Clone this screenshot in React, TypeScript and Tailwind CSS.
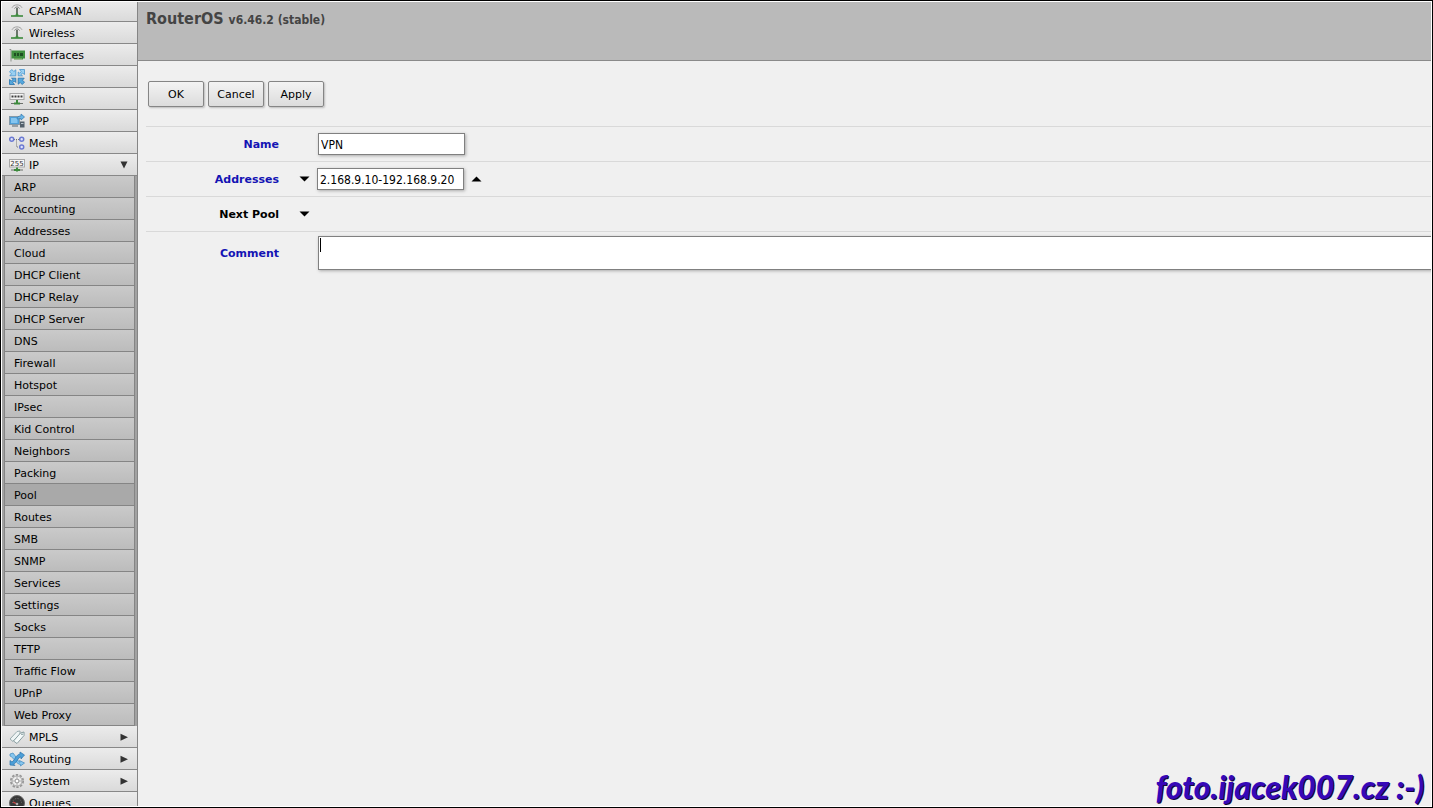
import React from "react";

type MenuEntry = {
  label: string;
  icon: React.ReactNode;
  arrow?: "down" | "right";
};

const AntennaIcon: React.FC = () => (
  <svg viewBox="0 0 16 16" className="size-4" fill="none">
    <path d="M3 4.800C4.500 0.900 11.500 0.900 13 4.800" stroke="#a3a3a3" />
    <path d="M5.500 5.500C6.500 3.500 9.500 3.500 10.500 5.500" stroke="#7c7c7c" />
    <path d="M8 5v8" stroke="#4d5a4d" strokeWidth="1.600" />
    <path d="M2 13h12" stroke="#3c8a3c" strokeWidth="1.600" />
    <path d="M4.500 12.500C7 12.200 7.300 11 8 9.500C8.700 11 9 12.200 11.500 12.500Z" fill="#3f8f3f" />
  </svg>
);

const InterfacesIcon: React.FC = () => (
  <svg viewBox="0 0 16 16" className="size-4" fill="none">
    <path d="M0.500 2.500h1.500v12" stroke="#8d938d" />
    <path d="M2.500 3.500H16v8h-2v1H5v-1H2.500Z" fill="#3f8f3f" />
    <path d="M5 6h2v3H5zM8 6h2v3H8zM11 6h3v3h-3z" fill="#1d4f22" />
    <path d="M6 11v1.500M8 11v1.500M10 11v1.500M12 11v1.500" stroke="#b9c98a" strokeWidth="0.700" />
  </svg>
);

const BridgeIcon: React.FC = () => (
  <svg viewBox="0 0 16 16" className="size-4" strokeLinejoin="round" strokeWidth="0.800">
    <g fill="#9ad0f2" stroke="#4694cd">
      <path d="M0.500 2.800L2.800 0.500L4.800 2.500L6.800 0.800V6.800H0.800L2.500 4.800Z" />
      <path d="M9.200 6.800V3L10.700 4.200L12.200 2.700L10.500 0.500H15.500V5.500L13.500 4L12 5.500L13.500 6.800Z" />
    </g>
    <g fill="#55a8de" stroke="#2471ac">
      <path d="M0.500 15.500V10.500L2.500 12L4 10.500L2.500 9.200H6.800V13.500L5.300 12L3.800 13.500L5.500 15.500Z" />
      <path d="M15.500 13.200L13.200 15.500L11.200 13.500L9.200 15.200V9.200H15.200L13.500 11.200Z" />
    </g>
  </svg>
);

const SwitchIcon: React.FC = () => (
  <svg viewBox="0 0 16 16" className="size-4" fill="none">
    <rect x="1" y="2.500" width="14" height="6" fill="#f4f4f4" stroke="#a5a5a5" />
    <path d="M2.500 5.500h11" stroke="#3d3d3d" strokeWidth="2" strokeDasharray="2 1" />
    <path d="M8 9v4" stroke="#3c8a3c" strokeWidth="2" />
    <path d="M2 12.500h12" stroke="#6b706b" />
    <path d="M5 12.500h6" stroke="#3c8a3c" strokeWidth="2" />
  </svg>
);

const PppIcon: React.FC = () => (
  <svg viewBox="0 0 16 16" className="size-4" fill="none">
    <rect x="0.500" y="3.500" width="10" height="8" fill="#4e9fd8" stroke="#8499a8" />
    <rect x="2" y="5" width="6.500" height="5" fill="#85c5ef" />
    <path d="M3 13h6" stroke="#808a91" strokeWidth="1.500" />
    <path d="M8 6C8 4 9.500 3 12 3V1L15.500 4L12 7V5.500C10 5.500 9 6 8 6Z" fill="#69b6e8" stroke="#3277ae" strokeWidth="0.700" />
    <rect x="11" y="8.500" width="4.500" height="6" fill="#53606b" />
    <path d="M12 10.500h2.500" stroke="#b9c5cd" />
  </svg>
);

const MeshIcon: React.FC = () => (
  <svg viewBox="0 0 16 16" className="size-4" fill="none">
    <path d="M5 4.500h5M7.500 4.500v7.500h2.500" stroke="#777" strokeDasharray="1 1" />
    <g fill="#dfe4fb" stroke="#6b79d2" strokeWidth="1.500">
      <circle cx="2.700" cy="4.200" r="2" />
      <circle cx="12.700" cy="4.200" r="2" />
      <circle cx="12.700" cy="12" r="2" />
    </g>
  </svg>
);

const IpIcon: React.FC = () => (
  <svg viewBox="0 0 16 16" className="size-4" fill="none">
    <rect x="0.500" y="2.500" width="15" height="7.500" fill="#f7f7f7" stroke="#a8a8a8" />
    <text x="8" y="8.800" textAnchor="middle" fontSize="7" fontFamily="DejaVu Sans" fill="#333">
      255
    </text>
    <path d="M8 10.500v4" stroke="#3c8a3c" strokeWidth="2" />
    <path d="M2 13h12" stroke="#6b706b" />
    <path d="M5 13h6" stroke="#3c8a3c" strokeWidth="2" />
  </svg>
);

const MplsIcon: React.FC = () => (
  <svg viewBox="0 0 16 16" className="size-4" strokeLinejoin="round">
    <path d="M1 10L8 2.500L11 2L11 5L4 12.500Z" fill="#eef4f4" stroke="#91a5a8" strokeWidth="0.900" />
    <path d="M4.500 12L11.500 4L15 3L15 6.500L8 14.500Z" fill="#f5fafa" stroke="#7e9599" strokeWidth="0.900" />
    <circle cx="13" cy="5.200" r="0.800" fill="#698488" />
  </svg>
);

const RoutingIcon: React.FC = () => (
  <svg viewBox="0 0 16 16" className="size-4" strokeLinejoin="round" strokeWidth="0.700">
    <path
      d="M1 3L4 2C7 5 8 10 11 11.500L10.500 9.500L15.500 12L11.500 15V13.500C7 13 5.500 7 1 5Z"
      fill="#86c6ee"
      stroke="#3e87bd"
    />
    <path
      d="M1 14V9.500L3 11C6 9 7 3.500 11 3V1L15.500 4L12 8V6C9 6 8 12 4.500 13L6 14.500Z"
      fill="#4c9fd8"
      stroke="#2c72ab"
    />
  </svg>
);

const SystemIcon: React.FC = () => (
  <svg viewBox="0 0 16 16" className="size-4" fill="none">
    <circle cx="8" cy="8" r="6.200" stroke="#969696" strokeWidth="1.700" strokeDasharray="2.400 1.490" />
    <circle cx="8" cy="8" r="5" fill="#ededed" stroke="#999" strokeWidth="0.800" />
    <circle cx="8" cy="8" r="2" fill="#fff" stroke="#8c8c8c" />
    <path d="M8 3v3M8 10v3M3 8h3M10 8h3" stroke="#b3b3b3" />
  </svg>
);

const QueuesIcon: React.FC = () => (
  <svg viewBox="0 0 16 16" className="size-4" fill="none">
    <circle cx="8" cy="8" r="7.500" fill="#383838" stroke="#676767" />
    <path d="M3.500 8a4.500 4.500 0 0 1 9 0" stroke="#777" strokeDasharray="1 1.500" />
    <path d="M8 9L4 7" stroke="#d14545" strokeWidth="1.300" />
    <circle cx="8" cy="9" r="1.300" fill="#aaa" />
  </svg>
);

const topMenu: MenuEntry[] = [
  { label: "CAPsMAN", icon: <AntennaIcon /> },
  { label: "Wireless", icon: <AntennaIcon /> },
  { label: "Interfaces", icon: <InterfacesIcon /> },
  { label: "Bridge", icon: <BridgeIcon /> },
  { label: "Switch", icon: <SwitchIcon /> },
  { label: "PPP", icon: <PppIcon /> },
  { label: "Mesh", icon: <MeshIcon /> },
  { label: "IP", icon: <IpIcon />, arrow: "down" },
];

const ipMenu = [
  "ARP",
  "Accounting",
  "Addresses",
  "Cloud",
  "DHCP Client",
  "DHCP Relay",
  "DHCP Server",
  "DNS",
  "Firewall",
  "Hotspot",
  "IPsec",
  "Kid Control",
  "Neighbors",
  "Packing",
  "Pool",
  "Routes",
  "SMB",
  "SNMP",
  "Services",
  "Settings",
  "Socks",
  "TFTP",
  "Traffic Flow",
  "UPnP",
  "Web Proxy",
];

const bottomMenu: MenuEntry[] = [
  { label: "MPLS", icon: <MplsIcon />, arrow: "right" },
  { label: "Routing", icon: <RoutingIcon />, arrow: "right" },
  { label: "System", icon: <SystemIcon />, arrow: "right" },
  { label: "Queues", icon: <QueuesIcon /> },
];

const MenuItem: React.FC<{ entry: MenuEntry }> = ({ entry }) => (
  <li>
    <a
      href="#"
      className="flex h-[22px] items-center border-b border-[#888] bg-linear-to-b from-[#ececec] to-[#dadada] pr-[9px] pl-[7px]"
    >
      {entry.icon}
      <span className="ml-1 flex-1 pt-0.5">{entry.label}</span>
      {entry.arrow && (
        <svg viewBox="0 0 8 8" className="size-2 fill-[#333]">
          {entry.arrow === "down" ? <path d="M0.500 0.500h7L4 7.500Z" /> : <path d="M0.500 0.800L8 4.300L0.500 7.800Z" />}
        </svg>
      )}
    </a>
  </li>
);

const Sidebar: React.FC = () => (
  <nav className="w-[136px] shrink-0 overflow-hidden border-r border-[#858585]">
    <ul className="-mt-0.5">
      {topMenu.map((entry) => (
        <MenuItem key={entry.label} entry={entry} />
      ))}
      <li>
        <ul className="border-x-2 border-[#a2a2a2] bg-[#a2a2a2]">
          {ipMenu.map((label) => (
            <li key={label}>
              <a
                href="#"
                className={`flex h-[22px] items-center border-x border-b border-[#858585] pt-0.5 pl-[9px] ${
                  label === "Pool" ? "bg-[#a9a9a9]" : "bg-linear-to-b from-[#cacaca] to-[#bcbcbc]"
                }`}
              >
                {label}
              </a>
            </li>
          ))}
        </ul>
      </li>
      {bottomMenu.map((entry) => (
        <MenuItem key={entry.label} entry={entry} />
      ))}
    </ul>
  </nav>
);

const ToolButton: React.FC<{ label: string }> = ({ label }) => (
  <button
    type="button"
    className="h-[26px] w-14 rounded-xs border border-[#858585] bg-linear-to-b from-[#f3f3f3] to-[#dcdcdc] pt-0.5 text-center shadow-[1px_1px_2px_#bbb]"
  >
    {label}
  </button>
);

const ArrowButton: React.FC<{ label: string; up?: boolean }> = ({ label, up }) => (
  <button type="button" aria-label={label} className="flex h-5 w-[11px] items-center justify-center">
    <svg viewBox="0 0 11 6" className="h-1.5 w-[11px] fill-black">
      {up ? <path d="M0.500 5.500L5.500 0.500L10.500 5.500Z" /> : <path d="M0.500 0.500h10L5.500 5.500Z" />}
    </svg>
  </button>
);

const fieldClass =
  "border border-[#808080] bg-white text-[12px] font-['DejaVu_Sans_Condensed','DejaVu_Sans',sans-serif] shadow-[1px_1px_3px_#aaa] outline-none";
const rowClass = "flex h-[35px] items-center border-t border-[#d9d9d9]";
const labelClass = "w-[133px] shrink-0 pt-0.5 text-right font-bold";

const PoolForm: React.FC = () => (
  <form className="mt-[19px] pl-2">
    <div className={rowClass}>
      <label htmlFor="name" className={`${labelClass} text-[#1414b4]`}>
        Name
      </label>
      <input id="name" defaultValue="VPN" className={`${fieldClass} ml-[39px] h-[22px] w-[147px] px-0.5 pt-0.5`} />
    </div>
    <div className={rowClass}>
      <label htmlFor="addresses" className={`${labelClass} text-[#1414b4]`}>
        Addresses
      </label>
      <div className="ml-5 flex items-center gap-[7px]">
        <ArrowButton label="Remove address" />
        <input
          id="addresses"
          defaultValue="2.168.9.10-192.168.9.20"
          className={`${fieldClass} h-[22px] w-[147px] px-0.5 pt-0.5`}
        />
        <ArrowButton label="Add address" up />
      </div>
    </div>
    <div className={rowClass}>
      <span className={labelClass}>Next Pool</span>
      <div className="ml-5 flex">
        <ArrowButton label="Select next pool" />
      </div>
    </div>
    <div className="flex items-center border-t border-[#d9d9d9] pt-1">
      <label htmlFor="comment" className={`${labelClass} text-[#1414b4]`}>
        Comment
      </label>
      <div className="relative -mr-1 ml-[39px] h-[34px] flex-1">
        <textarea id="comment" className={`${fieldClass} block size-full resize-none px-0.5`} />
        <span className="absolute top-0.5 left-0.5 h-[14px] w-px bg-black" />
      </div>
    </div>
  </form>
);

const App: React.FC = () => {
  return (
    <div className="relative h-screen overflow-hidden border border-black bg-white p-px font-['DejaVu_Sans',Verdana,sans-serif] text-[11px] leading-4 text-black">
      <div className="flex h-full bg-[#f0f0f0]">
        <Sidebar />
        <main className="min-w-0 flex-1 overflow-hidden">
          <header className="h-[59px] border-b border-[#8a8a8a] bg-[#bababa] pt-[7px] pl-2">
            <h1 className="font-['DejaVu_Sans_Condensed','DejaVu_Sans',sans-serif] text-[16px] leading-5 font-bold text-[#444]">
              RouterOS <span className="text-[12px]">v6.46.2 (stable)</span>
            </h1>
          </header>
          <div className="mt-5 flex gap-1 pl-2.5">
            <ToolButton label="OK" />
            <ToolButton label="Cancel" />
            <ToolButton label="Apply" />
          </div>
          <PoolForm />
        </main>
      </div>
      <p className="absolute right-2 bottom-1 font-[Lato,sans-serif] text-[32px] leading-8 font-black whitespace-nowrap text-[#3608b8] italic [text-shadow:1px_1px_0_#10083c]">
        foto.ijacek007.cz :-)
      </p>
    </div>
  );
};

export default App;
